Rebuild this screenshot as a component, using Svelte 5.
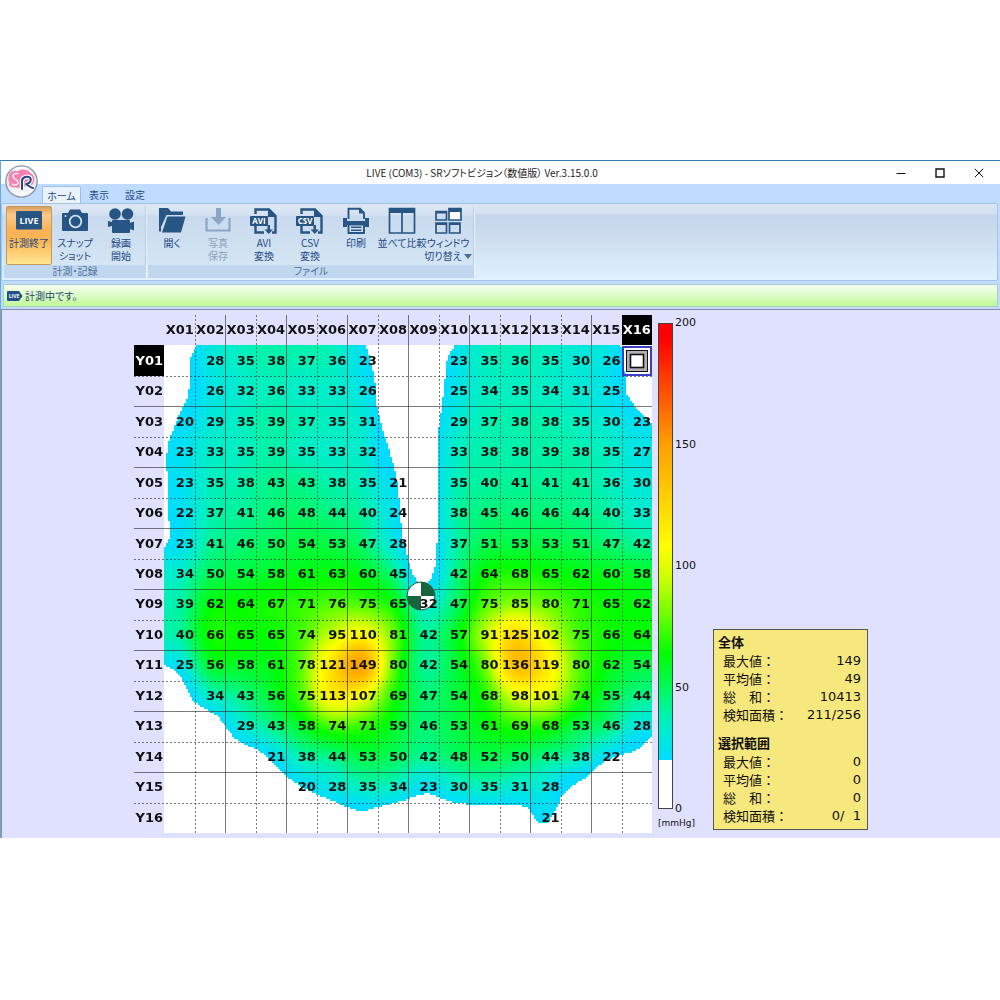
<script>
  import { onMount } from 'svelte';

  const pad = (n) => String(n).padStart(2, '0');
  const SIZE = 16;
  const columns = Array.from({ length: SIZE }, (_, i) => 'X' + pad(i + 1));

  const readings = [
    [0, 28, 35, 38, 37, 36, 23, 0, 0, 23, 35, 36, 35, 30, 26, 0],
    [0, 26, 32, 36, 33, 33, 26, 0, 0, 25, 34, 35, 34, 31, 25, 0],
    [20, 29, 35, 39, 37, 35, 31, 0, 0, 29, 37, 38, 38, 35, 30, 23],
    [23, 33, 35, 39, 35, 33, 32, 0, 0, 33, 38, 38, 39, 38, 35, 27],
    [23, 35, 38, 43, 43, 38, 35, 21, 0, 35, 40, 41, 41, 41, 36, 30],
    [22, 37, 41, 46, 48, 44, 40, 24, 0, 38, 45, 46, 46, 44, 40, 33],
    [23, 41, 46, 50, 54, 53, 47, 28, 0, 37, 51, 53, 53, 51, 47, 42],
    [34, 50, 54, 58, 61, 63, 60, 45, 0, 42, 64, 68, 65, 62, 60, 58],
    [39, 62, 64, 67, 71, 76, 75, 65, 32, 47, 75, 85, 80, 71, 65, 62],
    [40, 66, 65, 65, 74, 95, 110, 81, 42, 57, 91, 125, 102, 75, 66, 64],
    [25, 56, 58, 61, 78, 121, 149, 80, 42, 54, 80, 136, 119, 80, 62, 54],
    [0, 34, 43, 56, 75, 113, 107, 69, 47, 54, 68, 98, 101, 74, 55, 44],
    [0, 0, 29, 43, 58, 74, 71, 59, 46, 53, 61, 69, 68, 53, 46, 28],
    [0, 0, 0, 21, 38, 44, 53, 50, 42, 48, 52, 50, 44, 38, 22, 0],
    [0, 0, 0, 0, 20, 28, 35, 34, 23, 30, 35, 31, 28, 0, 0, 0],
    [0, 0, 0, 0, 0, 0, 0, 0, 0, 0, 0, 0, 21, 0, 0, 0]
  ];

  /* Contact outline in plot units (488 x 488). */
  const outline = [
    [33, 0], [30, 5], [26, 15], [25, 45], [24, 53], [20, 61], [14, 73], [8, 88], [4, 100], [2, 115],
    [3, 125], [4, 145], [4, 165], [6, 185], [6, 193], [2, 200], [0, 206], [-2, 206], [-2, 319], [1, 320], [11, 325],
    [18, 334], [24, 345], [30, 357], [40, 363], [54, 371], [62, 382], [70, 393], [80, 399], [92, 404],
    [104, 412], [114, 422], [123, 432], [136, 441], [152, 449], [169, 456], [183, 462], [196, 466],
    [204, 465], [214, 462], [226, 459], [239, 456], [249, 452], [263, 448], [274, 452], [289, 457],
    [309, 460], [336, 460], [351, 459], [363, 462], [369, 470], [374, 478], [381, 479], [384, 477],
    [391, 467], [397, 453], [406, 442], [423, 432], [433, 422], [443, 415], [456, 410], [466, 408],
    [474, 404], [488, 391], [490, 391], [490, 80], [488, 78], [479, 69], [471, 61], [462, 48], [461, 25],
    [459, 7], [456, 0], [291, 0], [286, 8], [282, 18], [281, 35], [278, 62], [275, 82], [274, 105],
    [273, 198], [271, 222], [268, 232], [264, 238], [259, 239], [254, 237], [248, 228], [243, 210],
    [238, 192], [236, 165], [234, 142], [231, 125], [226, 108], [223, 98], [218, 82], [213, 62],
    [211, 38], [209, 25], [204, 7], [202, 0]
  ];

  const stops = [
    [20, 0, 220, 255], [35, 0, 240, 195], [50, 0, 250, 90], [64, 0, 255, 0],
    [80, 110, 255, 0], [95, 205, 255, 0], [108, 255, 255, 0], [125, 255, 215, 0],
    [150, 255, 160, 0], [200, 255, 0, 0]
  ];

  function colourOf(v) {
    const p = Math.min(200, Math.max(20, v));
    let i = 1;
    while (stops[i][0] < p) i++;
    const a = stops[i - 1];
    const b = stops[i];
    const t = (p - a[0]) / (b[0] - a[0]);
    return [1, 2, 3].map((k) => a[k] + (b[k] - a[k]) * t);
  }

  const clampIndex = (i) => Math.min(SIZE - 1, Math.max(0, i));
  const at = (r, c) => readings[clampIndex(r)][clampIndex(c)] || 12;
  const cubic = (a, b, c, d, t) =>
    b + 0.5 * t * (c - a + t * (2 * a - 5 * b + 4 * c - d + t * (3 * (b - c) + d - a)));

  function pressureAt(x, y) {
    const gx = x / 30.5 - 0.5;
    const gy = y / 30.5 - 0.5;
    const c = Math.floor(gx);
    const r = Math.floor(gy);
    const rows = [-1, 0, 1, 2].map((k) =>
      cubic(at(r + k, c - 1), at(r + k, c), at(r + k, c + 1), at(r + k, c + 2), gx - c)
    );
    return cubic(rows[0], rows[1], rows[2], rows[3], gy - r);
  }

  function touches(x, y) {
    let inside = false;
    for (let i = 0, j = outline.length - 1; i < outline.length; j = i++) {
      const [xi, yi] = outline[i];
      const [xj, yj] = outline[j];
      if (yi > y !== yj > y && x < ((xj - xi) * (y - yi)) / (yj - yi) + xi) inside = !inside;
    }
    return inside;
  }

  let canvas;
  onMount(() => {
    const n = canvas.width;
    const unit = 488 / n;
    const ctx = canvas.getContext('2d');
    const image = ctx.createImageData(n, n);
    for (let j = 0; j < n; j++) {
      for (let i = 0; i < n; i++) {
        const x = (i + 0.5) * unit;
        const y = (j + 0.5) * unit;
        const rgb = touches(x, y) ? colourOf(pressureAt(x, y)) : [255, 255, 255];
        image.data.set([rgb[0], rgb[1], rgb[2], 255], (j * n + i) * 4);
      }
    }
    ctx.putImageData(image, 0, 0);
  });

  const gridLines = Array.from({ length: 15 }, (_, i) => ({
    at: Math.round(((i + 2) * 518) / 17),
    dashed: i % 2 === 0
  }));

  const tabs = ['ホーム', '表示', '設定'];
  const groups = [
    {
      name: '計測・記録',
      items: [
        { icon: 'live', lines: ['計測終了'], active: true },
        { icon: 'camera', lines: ['スナップ', 'ショット'] },
        { icon: 'video', lines: ['録画', '開始'] }
      ]
    },
    {
      name: 'ファイル',
      items: [
        { icon: 'open', lines: ['開く'] },
        { icon: 'save', lines: ['写真', '保存'], disabled: true },
        { icon: 'avi', lines: ['AVI', '変換'] },
        { icon: 'csv', lines: ['CSV', '変換'] },
        { icon: 'print', lines: ['印刷'] },
        { icon: 'compare', lines: ['並べて比較'] },
        { icon: 'windows', lines: ['ウィンドウ', '切り替え'], menu: true }
      ]
    }
  ];

  const stats = [
    { title: '全体', rows: [['最大値：', '149'], ['平均値：', '49'], ['総　和：', '10413'], ['検知面積：', '211/256']] },
    { title: '選択範囲', rows: [['最大値：', '0'], ['平均値：', '0'], ['総　和：', '0'], ['検知面積：', '0/  1']] }
  ];
  const scale = [200, 150, 100, 50, 0];
</script>

<div class="window">
  <header class="titlebar">
    <h1>LIVE (COM3) - SRソフトビジョン（数値版） Ver.3.15.0.0</h1>
    <div class="controls">
      <button aria-label="最小化"><svg viewBox="0 0 10 10"><path d="M.5 5.5h9" /></svg></button>
      <button aria-label="最大化"><svg viewBox="0 0 10 10"><path d="M1 1h8v8H1z" stroke-width="1.4" /></svg></button>
      <button aria-label="閉じる"><svg viewBox="0 0 10 10"><path d="M.8.8l8.4 8.4M9.2.8L.8 9.2" /></svg></button>
    </div>
  </header>

  <button class="logo" aria-label="メニュー">
    <svg viewBox="0 0 32 32">
      <defs>
        <linearGradient id="rim" x1="0" y1="0" x2="0" y2="1">
          <stop offset="0" stop-color="#fff" /><stop offset=".55" stop-color="#e3e7ed" /><stop offset="1" stop-color="#fff" />
        </linearGradient>
      </defs>
      <circle cx="16" cy="16" r="15.2" fill="url(#rim)" stroke="#8b95a3" stroke-width="1.300" />
      <path d="M3.500 12C3.500 7 8 4.500 12 6C16 3.500 22 4 24.500 7.500C28.500 9 29.500 14 27.500 17C27 20 23 21 20 20.500C16 22 12 22.500 9 21.500C5 22 3 19.500 4.500 17C3 15.500 3 13.500 3.500 12Z" fill="#f583b2" />
      <path d="M13 8.500C9.500 7 6.500 9.500 8.500 12.500C10 14.500 13.500 14.500 12.500 18C11.500 20 8 20 6.500 18" fill="none" stroke="#fff" stroke-width="1.200" />
      <path d="M16.500 24V15C17 11.500 24.500 9.500 25 14C25 17 22 18.500 20 18.500C22 19 24 22 28 22.500" fill="none" stroke="#fff" stroke-width="4.200" />
      <path d="M16.500 24V15C17 11.500 24.500 9.500 25 14C25 17 22 18.500 20 18.500C22 19 24 22 28 22.500" fill="none" stroke="#24477f" stroke-width="2" />
    </svg>
  </button>

  <nav class="tabs">
    {#each tabs as tab, i}
      <button class:current={i === 0}>{tab}</button>
    {/each}
  </nav>

  <div class="ribbon">
    {#each groups as group}
      <section class="group">
        <div class="tools">
          {#each group.items as item}
            <button class="tool" class:active={item.active} disabled={item.disabled}>
              <svg class="icon" viewBox="0 0 28 28">
                {#if item.icon === 'live'}
                  <rect x="1" y="4" width="26" height="18.500" rx="1" />
                  <text x="14" y="17" class="badge">LIVE</text>
                {:else if item.icon === 'camera'}
                  <path d="M2 6h5l2-3.500h10L21 6h5a1 1 0 0 1 1 1v16a1 1 0 0 1-1 1H2a1 1 0 0 1-1-1V7a1 1 0 0 1 1-1z" />
                  <circle cx="14.500" cy="14.500" r="5.800" fill="none" stroke="#d3e2f2" stroke-width="1.800" />
                  <circle cx="4.500" cy="9" r="1" fill="#d3e2f2" />
                {:else if item.icon === 'video'}
                  <circle cx="8" cy="7" r="5.800" /><circle cx="20.500" cy="7" r="5.800" />
                  <path d="M6 13h16a1 1 0 0 1 1 1v2l4-1.500v9L23 22v3a1 1 0 0 1-1 1H6a1 1 0 0 1-1-1v-6l-4 1v-6l4 1v-1a1 1 0 0 1 1-1z" />
                {:else if item.icon === 'open'}
                  <path d="M1 1h9l3 3.500h12V8H8.500L3 20v4.500H1z" />
                  <path d="M9.500 9.500h18L23 25.500H4z" />
                {:else if item.icon === 'save'}
                  <path d="M12 1h5v9h5l-7.500 8L7 10h5z" />
                  <path d="M2.500 11v12.500h23V11" fill="none" stroke="currentColor" stroke-width="2.200" />
                {:else if item.icon === 'avi' || item.icon === 'csv'}
                  <path d="M5.500 7V2.500H19l6.500 6.500v16.500H22M5.500 19v6.500H14" fill="none" stroke="currentColor" stroke-width="2.400" />
                  <path d="M18 1.500l8.500 8.500H18z" />
                  <path d="M17.500 18h2.500v4.500h3L18.800 27l-4.300-4.500h3z" />
                  <rect x="0" y="9" width="18" height="10" rx="1" />
                  <text x="9" y="17" class="badge small">{item.icon.toUpperCase()}</text>
                {:else if item.icon === 'print'}
                  <path d="M6.500 12V1.800H18l4 4V12" fill="none" stroke="currentColor" stroke-width="1.900" />
                  <path d="M17 1.500l5 5h-5z" />
                  <path d="M1 11h4v3h18v-3h4v9h-4v-3H5v3H1zM3 14h22v4H3z" />
                  <path d="M6.500 17.500h15.500V26H6.500z" fill="#d3e2f2" stroke="currentColor" stroke-width="1.900" />
                  <path d="M9 20.300h10.500M9 23.200h10.500" stroke="currentColor" stroke-width="1.400" />
                {:else if item.icon === 'compare'}
                  <path d="M1.500 1.500h25v24.500h-25zM14 2v24" fill="none" stroke="currentColor" stroke-width="1.700" />
                  <path d="M1 1h26v5H1z" />
                {:else}
                  <path d="M2 4.500h10.500V13H2zM2 16h10.500v10H2zM15.500 16H26v10H15.500z" fill="none" stroke="currentColor" stroke-width="1.700" />
                  <path d="M2 4.500h10.500v2H2zM2 16h10.500v2H2zM15.500 16H26v2H15.500z" />
                  <path d="M15 1.500h12v11.500H15z" fill="#fff" stroke="currentColor" stroke-width="1.700" />
                  <path d="M15 1h12v4H15z" />
                {/if}
              </svg>
              {#each item.lines as line, i}
                <span>{line}{#if item.menu && i === 1}<svg class="caret" viewBox="0 0 8 5"><path d="M0 0h8L4 5z" /></svg>{/if}</span>
              {/each}
            </button>
          {/each}
        </div>
        <h2>{group.name}</h2>
      </section>
    {/each}
  </div>

  <div class="status" role="status">
    <svg viewBox="0 0 16 12"><path d="M1 1h11l3.500 5L12 11H1a1 1 0 0 1-1-1V2a1 1 0 0 1 1-1z" /><text x="7" y="8" class="mini">LIVE</text></svg>
    <span>計測中です。</span>
  </div>

  <main>
    <div class="chart">
      <canvas bind:this={canvas} width="244" height="244"></canvas>
      <svg class="lines" viewBox="0 0 518 518">
        {#each gridLines as line}
          <path d="M{line.at + 0.5} 0V518M0 {line.at + 0.5}H518" class:dashed={line.dashed} />
        {/each}
        <g class="gravity">
          <circle cx="287" cy="281" r="14" />
          <path d="M287 281V267A14 14 0 0 1 301 281ZM287 281V295A14 14 0 0 1 273 281Z" />
        </g>
      </svg>
      <table>
        <thead>
          <tr>
            <td></td>
            {#each columns as c, i}<th scope="col" class:picked={i === 15}>{c}</th>{/each}
          </tr>
        </thead>
        <tbody>
          {#each readings as row, r}
            <tr>
              <th scope="row" class:picked={r === 0}>Y{pad(r + 1)}</th>
              {#each row as v, c}
                {#if r === 0 && c === 15}
                  <td class="cursor">
                    <svg viewBox="0 0 30 30">
                      <rect x="1" y="1" width="28" height="28" fill="none" stroke="#3d3dc8" stroke-width="2" />
                      <rect x="3" y="3" width="24" height="24" fill="#fff" />
                      <rect x="4.500" y="4.500" width="21" height="21" fill="#b4acb8" stroke="#111" />
                      <rect x="8.500" y="8.500" width="13" height="13" fill="#fff" stroke="#111" stroke-width="1.600" />
                    </svg>
                  </td>
                {:else}
                  <td>{v || ''}</td>
                {/if}
              {/each}
            </tr>
          {/each}
        </tbody>
      </table>
    </div>

    <div class="legend">
      <div class="scale">
        <div class="bar"></div>
        <ol>{#each scale as s}<li>{s}</li>{/each}</ol>
      </div>
      <p>[mmHg]</p>
    </div>

    <aside>
      {#each stats as block}
        <h3>{block.title}</h3>
        <dl>
          {#each block.rows as [name, value]}
            <div><dt>{name}</dt><dd>{value}</dd></div>
          {/each}
        </dl>
      {/each}
    </aside>
  </main>
</div>

<style>
  :global(body) { background: #fff; }
  * { box-sizing: border-box; margin: 0; padding: 0; }
  button { border: 0; background: none; font: inherit; color: inherit; }
  .window {
    position: relative;
    margin-top: 160px;
    border-top: 1px solid #2f7fb5;
    border-left: 1px solid #6aa9dc;
    background: #bfdbff;
    font: 10px/13px "Noto Sans CJK JP", sans-serif;
    font-feature-settings: "palt";
    color: #1e4a86;
  }
  .titlebar { display: flex; align-items: center; height: 23px; padding-left: 82px; background: #fff; color: #222; }
  h1 { flex: 1; text-align: center; font-size: 10px; font-weight: 400; line-height: 22px; }
  .controls { display: flex; padding-right: 2px; }
  .controls button { width: 39px; height: 23px; display: grid; place-items: center; }
  .controls svg { width: 10px; height: 10px; fill: none; stroke: #111; }

  .logo { position: absolute; left: 4px; top: 4px; width: 33px; height: 33px; z-index: 2; }
  .logo svg { width: 33px; height: 33px; display: block; }

  .tabs { display: flex; height: 19px; padding: 2px 0 0 41px; }
  .tabs button { width: 36px; height: 17px; line-height: 15px; }
  .tabs .current { width: 39px; border: 1px solid #9fc0e6; border-bottom: 0; border-radius: 2px 2px 0 0; background: #eaf2fc; line-height: 13px; }

  .ribbon {
    display: flex;
    gap: 1px;
    height: 78px;
    margin-right: 2px;
    padding: 2px;
    border: 1px solid #a6c4e6;
    border-radius: 2px;
    background: linear-gradient(#dce6f3, #d3dff0 10px, #c5d6ec 11px, #cfdff0 50%, #e0f2ff);
  }
  .group {
    display: flex;
    flex-direction: column;
    border-right: 1px solid #e9f3fc;
    border-radius: 2px;
    background: linear-gradient(#dee8f5, #d3e0f1 9px, #c9daee 10px, #d0e1f2 60%, #d9e9f7);
    box-shadow: inset -1px 0 #b3cde8;
  }
  .tools { display: flex; padding: 0 2px; height: 59px; }
  .group:nth-child(2) .tools { padding: 0 3px 0 1px; }
  .group h2 { flex: 1; text-align: center; font-size: 10px; line-height: 12px; font-weight: 400; color: #4d719f; background: #c1d7ef; }
  .tool {
    display: flex;
    flex-direction: column;
    align-items: center;
    width: 46px;
    height: 59px;
    border: 1px solid transparent;
    white-space: nowrap;
  }
  .tool.active { border-color: #c49a5a; border-radius: 2px; background: linear-gradient(#d9a05c, #fbc98a 8px, #f9b257 40%, #fbb655 60%, #ffe792); }
  .tool:disabled { color: #8fa3bb; }
  .icon { width: 28px; height: 28px; margin-bottom: 1px; fill: currentColor; color: #275584; }
  .tool:disabled .icon { color: #8aa6c4; }
  .badge { fill: #fff; font: bold 9px "Open Sans", sans-serif; text-anchor: middle; }
  .badge.small { font-size: 8px; }
  .caret { width: 8px; height: 5px; margin: 0 0 1px 2px; fill: #476f9f; }

  .status {
    display: flex;
    align-items: center;
    gap: 2px;
    height: 23px;
    margin: 3px 2px 2px 2px;
    padding: 0 3px;
    border: 1px solid #a8d0c4;
    background: linear-gradient(#f6fef0, #dcfcc6 50%, #c0fb97);
    color: #23436e;
  }
  .status svg { width: 16px; height: 12px; fill: #24508a; }
  .mini { fill: #fff; font: bold 5px "Open Sans", sans-serif; text-anchor: middle; }

  main {
    display: flex;
    align-items: flex-start;
    padding: 5px 0 5px 132px;
    border-top: 1px solid #8b8ba0;
    border-left: 1px solid #8b8ba0;
    background: #e0e0ff;
    color: #111;
    font-family: "DejaVu Sans", "Noto Sans CJK JP", sans-serif;
  }
  .chart { position: relative; width: 518px; height: 518px; flex: none; }
  canvas { position: absolute; right: 0; bottom: 0; width: 488px; height: 488px; image-rendering: pixelated; }
  .lines { position: absolute; inset: 0; width: 100%; height: 100%; fill: none; stroke: #333; stroke-opacity: .65; }
  .lines .dashed { stroke-dasharray: 2 2; }
  .gravity { stroke: #12502f; stroke-opacity: 1; }
  .gravity circle { fill: #fff; }
  .gravity path { fill: #17643d; stroke: none; }
  table { position: relative; display: grid; grid-template-rows: repeat(17, 1fr); width: 100%; height: 100%; }
  thead, tbody { display: contents; }
  tr { display: grid; grid-template-columns: repeat(17, 1fr); min-height: 0; }
  td, th { display: flex; align-items: center; min-width: 0; font-size: 13px; font-weight: 700; line-height: 16px; white-space: nowrap; }
  td { justify-content: flex-end; padding-right: 1px; }
  th { justify-content: center; }
  .picked { background: #000; color: #fff; }
  .cursor { padding: 0; }
  .cursor svg { width: 30px; height: 30px; }

  .legend { width: 55px; margin-left: 6px; flex: none; }
  .scale { display: flex; gap: 2px; padding-top: 8px; }
  .bar {
    width: 15px;
    height: 486px;
    border: 1px solid #444;
    background: linear-gradient(to top, #fff 10%, #00dcff 10%, #00f0c3 17.5%, #00fa5a 25%, #00ff00 32%, #6eff00 40%, #cdff00 47.5%, #ffff00 54%, #ffd700 62.5%, #ffa000 75%, #ff0000 97%);
  }
  ol { display: flex; flex-direction: column; justify-content: space-between; height: 500px; margin: -7px 0; list-style: none; font-size: 11px; line-height: 14px; }
  .legend p { padding-top: 7px; font-size: 9px; line-height: 14px; }

  aside {
    width: 155px;
    min-height: 201px;
    align-self: flex-end;
    margin-bottom: 3px;
    padding: 2px 6px 0 4px;
    border: 1px solid #555;
    background: #f7e87e;
    font-feature-settings: normal;
  }
  h3 { font: 700 13px/20px "Noto Sans CJK JP", sans-serif; }
  dl { padding: 0 0 9px 5px; }
  dl:last-child { padding-bottom: 4px; }
  dl div { display: flex; justify-content: space-between; height: 18px; }
  dt { font: 13px/18px "Noto Sans CJK JP", sans-serif; white-space: nowrap; }
  dd { font-size: 13px; line-height: 18px; white-space: pre; }
</style>
